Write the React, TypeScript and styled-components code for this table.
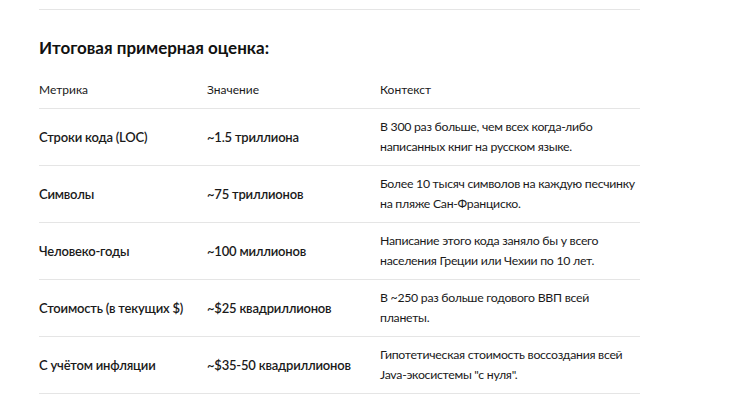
import React from "react";
import styled, { createGlobalStyle } from "styled-components";

const Global = createGlobalStyle`
  html, body { margin: 0; padding: 0; background: #ffffff; }
  body { font-family: Lato, Roboto, sans-serif; color: #1a1a1a; }
`;

const Page = styled.div`
  padding: 9px 0 0 39px;
  width: 601px;
`;

const Rule = styled.div`
  height: 1px;
  background: #e5e5e5;
`;

const Heading = styled.h3`
  margin: 26px 0 12px;
  font-size: 17px;
  line-height: 24px;
  font-weight: 700;
  color: #111;
`;

const Table = styled.table`
  width: 601px;
  border-collapse: collapse;
  table-layout: fixed;
  font-size: 13px;
  line-height: 20px;
`;

const Col = styled.col<{ $w: number }>`
  width: ${(p) => p.$w}px;
`;

const HeadCell = styled.th`
  text-align: left;
  font-weight: 400;
  font-size: 12px;
  padding: 8px 8px;
  &:first-child { padding-left: 0; }
`;

const Row = styled.tr`
  border-top: 1px solid #e5e5e5;
  &:last-child { border-bottom: 1px solid #e5e5e5; }
`;

const Cell = styled.td<{ $strong?: boolean }>`
  padding: 8px 8px;
  height: 40px;
  vertical-align: middle;
  font-weight: ${(p) => (p.$strong ? 600 : 400)};
  font-size: ${(p) => (p.$strong ? "13px" : "12.3px")};
  letter-spacing: ${(p) => (p.$strong ? "-0.2px" : "-0.28px")};
  &:first-child { padding-left: 0; }
  &:last-child { padding-right: 0; }
`;

const rows = [
  ["Строки кода (LOC)", "~1.5 триллиона", "В 300 раз больше, чем всех когда-либо написанных книг на русском языке."],
  ["Символы", "~75 триллионов", "Более 10 тысяч символов на каждую песчинку на пляже Сан-Франциско."],
  ["Человеко-годы", "~100 миллионов", "Написание этого кода заняло бы у всего населения Греции или Чехии по 10 лет."],
  ["Стоимость (в текущих $)", "~$25 квадриллионов", "В ~250 раз больше годового ВВП всей планеты."],
  ["С учётом инфляции", "~$35-50 квадриллионов", "Гипотетическая стоимость воссоздания всей Java-экосистемы \"с нуля\"."],
];

export default function App() {
  return (
    <Page>
      <Global />
      <Rule />
      <Heading>Итоговая примерная оценка:</Heading>
      <Table>
        <colgroup>
          <Col $w={160} />
          <Col $w={173} />
          <Col $w={268} />
        </colgroup>
        <thead>
          <tr>
            <HeadCell>Метрика</HeadCell>
            <HeadCell>Значение</HeadCell>
            <HeadCell>Контекст</HeadCell>
          </tr>
        </thead>
        <tbody>
          {rows.map((r) => (
            <Row key={r[0]}>
              <Cell $strong>{r[0]}</Cell>
              <Cell $strong>{r[1]}</Cell>
              <Cell>{r[2]}</Cell>
            </Row>
          ))}
        </tbody>
      </Table>
    </Page>
  );
}
